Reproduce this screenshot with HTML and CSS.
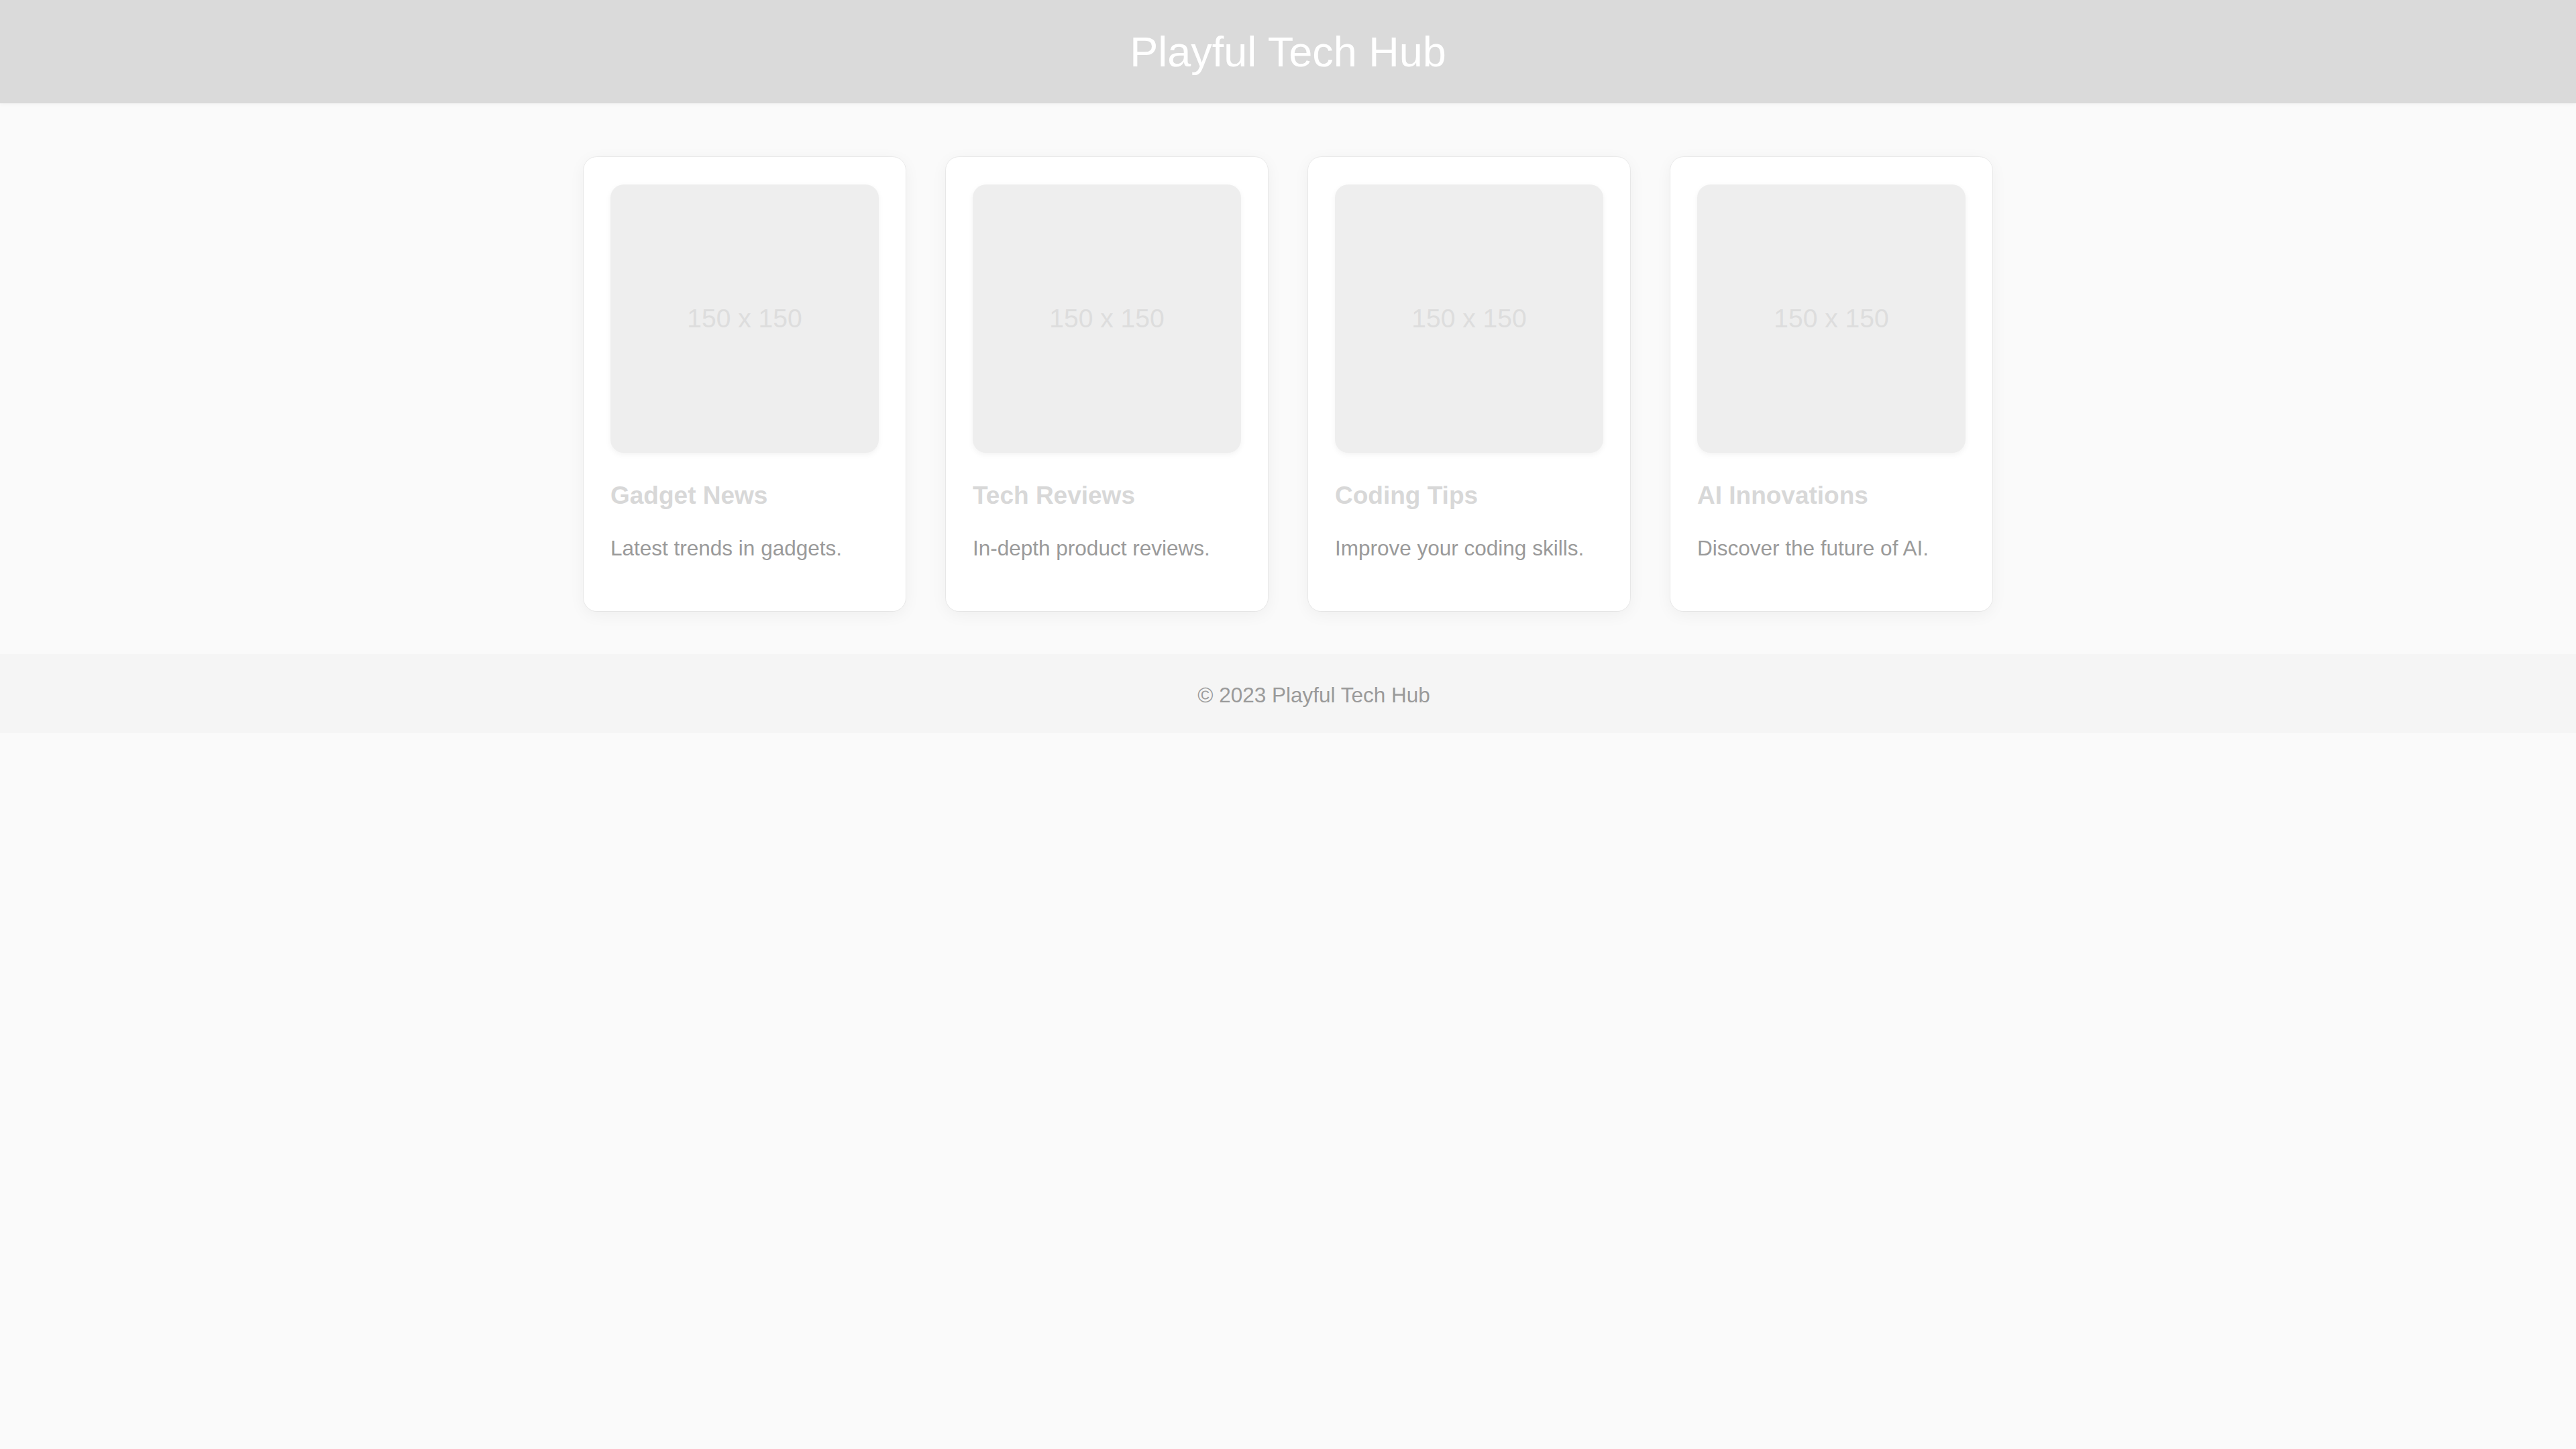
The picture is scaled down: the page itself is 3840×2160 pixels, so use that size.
FILE: index.html
```html
<!DOCTYPE html>
<html lang="en">
<head>
<meta charset="utf-8">
<title>Playful Tech Hub</title>
<link rel="stylesheet" href="styles.css">
</head>
<body>
<header class="site-header">
  <h1 class="site-title">Playful Tech Hub</h1>
</header>
<main class="content">
  <section class="card-grid">
    <article class="card">
      <div class="thumb"><span class="thumb-label">150 x 150</span></div>
      <h3 class="card-title">Gadget News</h3>
      <p class="card-text">Latest trends in gadgets.</p>
    </article>
    <article class="card">
      <div class="thumb"><span class="thumb-label">150 x 150</span></div>
      <h3 class="card-title">Tech Reviews</h3>
      <p class="card-text">In-depth product reviews.</p>
    </article>
    <article class="card">
      <div class="thumb"><span class="thumb-label">150 x 150</span></div>
      <h3 class="card-title">Coding Tips</h3>
      <p class="card-text">Improve your coding skills.</p>
    </article>
    <article class="card">
      <div class="thumb"><span class="thumb-label">150 x 150</span></div>
      <h3 class="card-title">AI Innovations</h3>
      <p class="card-text">Discover the future of AI.</p>
    </article>
  </section>
</main>
<footer class="site-footer">
  <p class="footer-text">© 2023 Playful Tech Hub</p>
</footer>
</body>
</html>
```

FILE: styles.css
```css
html, body {
  margin: 0;
  padding: 0;
}

body {
  background: #fafafa;
  font-family: "Liberation Sans", Arial, sans-serif;
  font-size: 31.5px;
  color: #999999;
}

.site-header {
  background: #dadada;
  padding: 41px 0;
  text-align: center;
  box-shadow: 0 2px 6px rgba(0, 0, 0, 0.03);
}

.site-title {
  margin: 0;
  font-size: 63px;
  font-weight: normal;
  color: #ffffff;
  line-height: normal;
}

.content {
  padding: 80px 0 64px;
}

.card-grid {
  display: flex;
  justify-content: center;
  gap: 60px;
}

.card {
  box-sizing: border-box;
  width: 480px;
  padding: 41px 40px 43px;
  background: #ffffff;
  border-radius: 20px;
  box-shadow: 0 0 0 1px rgba(0, 0, 0, 0.05), 0 5px 24px rgba(0, 0, 0, 0.05);
}

.thumb {
  width: 400px;
  height: 400px;
  background: #eeeeee;
  border-radius: 20px;
  display: flex;
  align-items: center;
  justify-content: center;
  box-shadow: 0 3px 8px rgba(0, 0, 0, 0.05);
}

.thumb-label {
  font-size: 39px;
  color: #dddddd;
}

.card-title {
  margin: 43px 0 39px;
  font-size: 37px;
  font-weight: bold;
  color: #d8d8d8;
}

.card-text {
  margin: 0 0 31.5px;
  color: #9a9a9a;
}

.site-footer {
  background: #f5f5f5;
  padding: 43px 0 38px 77px;
  text-align: center;
}

.footer-text {
  margin: 0;
  color: #9a9a9a;
}
```
